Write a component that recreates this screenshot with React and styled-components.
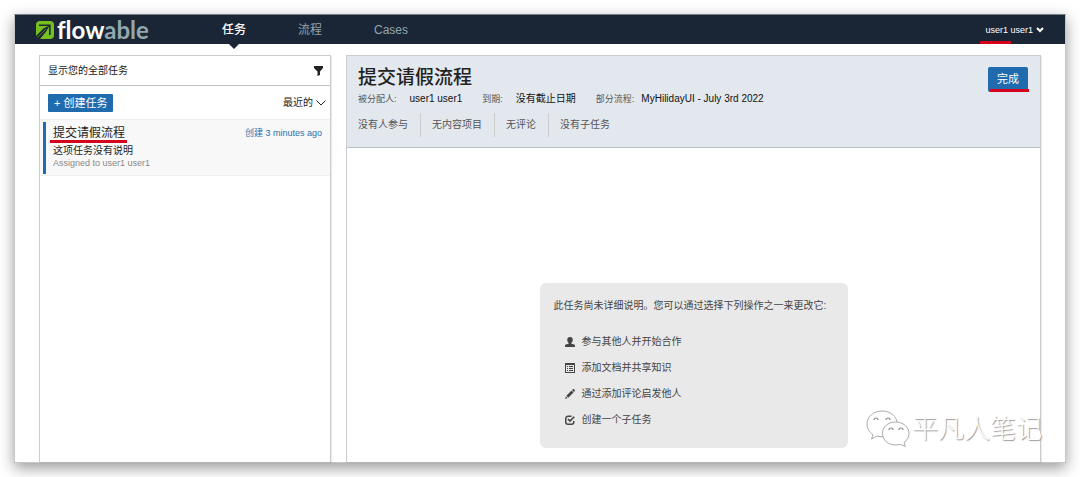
import React from 'react';
import styled, { createGlobalStyle } from 'styled-components';

const stats = ['没有人参与', '无内容项目', '无评论', '没有子任务'];

const UserIcon = () => (
  <Icon viewBox="0 0 20 20">
    <path d="M10 0C6 0 4.500 2.300 4.500 5.500c0 2.700 1 4.800 2.700 6.500v1.500L1.600 15C.5 15.500 0 16.200 0 17v3h20v-3c0-.8-.5-1.500-1.600-2l-5.600-1.500V12c1.700-1.700 2.700-3.800 2.700-6.500C15.500 2.300 14 0 10 0z" />
  </Icon>
);

const ListIcon = () => (
  <Icon viewBox="0 0 20 20">
    <path fillRule="evenodd" d="M1 0h18a1 1 0 0 1 1 1v18a1 1 0 0 1-1 1H1a1 1 0 0 1-1-1V1a1 1 0 0 1 1-1zm1 4v14h16V4zm2 2h2v2H4zm4 0h8v2H8zm-4 4h2v2H4zm4 0h8v2H8zm-4 4h2v2H4zm4 0h8v2H8z" />
  </Icon>
);

const PencilIcon = () => (
  <Icon viewBox="0 0 20 20">
    <path d="M15.600.6a1.800 1.800 0 0 1 2.500 0l1.300 1.300a1.800 1.800 0 0 1 0 2.500L18 5.800 14.200 2zM13.200 3l3.800 3.800L6.500 17.300 2.700 13.500zM1.800 14.800l3.400 3.400L0 20z" />
  </Icon>
);

const CheckIcon = () => (
  <Icon viewBox="0 0 20 20">
    <path d="M13 2.500H6A4.500 4.500 0 0 0 1.500 7v7A4.500 4.500 0 0 0 6 18.500h7a4.500 4.500 0 0 0 4.500-4.500v-2" fill="none" stroke="currentColor" strokeWidth="3" />
    <path d="M6 8l4 4L18.500 3.500" fill="none" stroke="currentColor" strokeWidth="3.400" />
  </Icon>
);

const actions = [
  { icon: UserIcon, text: '参与其他人并开始合作' },
  { icon: ListIcon, text: '添加文档并共享知识' },
  { icon: PencilIcon, text: '通过添加评论启发他人' },
  { icon: CheckIcon, text: '创建一个子任务' },
];

const Logo = () => (
  <Brand href="#" aria-label="flowable">
    <svg width="18" height="18" viewBox="0 0 18 18">
      <path d="M4 0h10a4 4 0 0 1 4 4v10a4 4 0 0 1-4 4H0V4a4 4 0 0 1 4-4z" fill="#78be20" />
      <path d="M3 4.200h10.800V14" fill="none" stroke="#1a2635" strokeWidth="1.600" />
      <path d="M13.500 4.500L10.500 10 4 18H0v-3l7.500-7.500z" fill="#1a2635" />
      <path d="M1.500 16.500L10 8" stroke="#78be20" strokeWidth=".6" />
    </svg>
    <span>flow<em>able</em></span>
  </Brand>
);

const Watermark = () => (
  <WatermarkBox>
    <svg width="44" height="38" viewBox="0 0 44 38">
      <g fill="#fff" stroke="#aaa" strokeWidth="1">
        <path d="M16 1C7.500 1 1 6.800 1 14c0 4.500 2.200 8 6 10.500L5.500 29l5.500-3c2 .6 4 .8 6 .7C28 26 31 20 31 13.500 31 6.500 24.500 1 16 1z" />
        <path d="M29.500 12C22 12 16.500 17 16.500 23.500S22 35 29.500 35c1.700 0 3.300-.2 4.800-.7l5 2.200-1.300-4c3-2 5-5.200 5-9C43 17 37 12 29.500 12z" />
      </g>
      <g fill="none" stroke="#888" strokeWidth="1.200">
        <path d="M8 10a2 2 0 0 1 4 0M20 10a2 2 0 0 1 4 0M23 20a2 2 0 0 1 4 0M33 20a2 2 0 0 1 4 0" />
      </g>
    </svg>
    平凡人笔记
  </WatermarkBox>
);

const App = () => {
  return (
    <>
      <GlobalStyle />
      <Page>
        <AppWindow>
          <NavBar>
            <Logo />
            <NavLinks>
              <NavLink href="#" $active>任务</NavLink>
              <NavLink href="#">流程</NavLink>
              <NavLink href="#">Cases</NavLink>
            </NavLinks>
            <UserMenu>
              user1 user1
              <svg width="8" height="6" viewBox="0 0 8 6">
                <path d="M1 1l3 3 3-3" fill="none" stroke="currentColor" strokeWidth="2" />
              </svg>
            </UserMenu>
          </NavBar>
          <Main>
            <TaskList>
              <FilterHeader>
                显示您的全部任务
                <FilterButton aria-label="filter">
                  <svg width="9" height="10" viewBox="0 0 9 10">
                    <path d="M0 0h9v2L6 5.500V9L3.500 10V5.500L0 2z" fill="currentColor" />
                  </svg>
                </FilterButton>
              </FilterHeader>
              <ListToolbar>
                <CreateButton>+ 创建任务</CreateButton>
                <SortButton>
                  最近的
                  <svg width="10" height="6" viewBox="0 0 10 6">
                    <path d="M.5.5L5 5 9.500.5" fill="none" stroke="currentColor" />
                  </svg>
                </SortButton>
              </ListToolbar>
              <TaskItem>
                <TaskRow>
                  <TaskName>提交请假流程</TaskName>
                  <Created>创建 3 minutes ago</Created>
                </TaskRow>
                <TaskText>这项任务没有说明</TaskText>
                <Assigned>Assigned to user1 user1</Assigned>
              </TaskItem>
            </TaskList>
            <Detail>
              <DetailHeader>
                <div>
                  <Title>提交请假流程</Title>
                  <MetaRow>
                    <Meta><span>被分配人:</span>user1 user1</Meta>
                    <Meta><span>到期:</span>没有截止日期</Meta>
                    <Meta $tight><span>部分流程:</span>MyHilidayUI - July 3rd 2022</Meta>
                  </MetaRow>
                  <StatRow>
                    {stats.map((stat) => <Stat key={stat}>{stat}</Stat>)}
                  </StatRow>
                </div>
                <CompleteButton>完成</CompleteButton>
              </DetailHeader>
              <DetailBody>
                <HelpBox>
                  <p>此任务尚未详细说明。您可以通过选择下列操作之一来更改它:</p>
                  <ActionList>
                    {actions.map(({ icon: ActionIcon, text }) => (
                      <li key={text}>
                        <ActionLink href="#"><ActionIcon />{text}</ActionLink>
                      </li>
                    ))}
                  </ActionList>
                </HelpBox>
              </DetailBody>
            </Detail>
          </Main>
          <Watermark />
        </AppWindow>
      </Page>
    </>
  );
};

const GlobalStyle = createGlobalStyle`
  * {
    box-sizing: border-box;
  }
  body {
    margin: 0;
    background: #fff;
    font: 10px/14px "Liberation Sans", "Noto Sans CJK SC", sans-serif;
    color: #222;
  }
  button {
    font: inherit;
    color: inherit;
    border: none;
    background: none;
    padding: 0;
  }
  a {
    color: inherit;
    text-decoration: none;
  }
  h1, h2, p, ul {
    margin: 0;
    padding: 0;
  }
`;

const Page = styled.div`
  min-height: 100vh;
  display: flex;
  padding: 14px;
`;

const AppWindow = styled.div`
  flex: 1;
  display: flex;
  flex-direction: column;
  position: relative;
  border: 1px solid #c4c6c8;
  border-top-color: #77818a;
  background: #fff;
  box-shadow: 0 5px 14px rgba(0, 0, 0, 0.4);
`;

const NavBar = styled.nav`
  display: flex;
  height: 29px;
  padding: 0 21px;
  background: #1a2635;
`;

const Brand = styled.a`
  display: flex;
  align-items: center;
  gap: 3px;
  width: 160px;
  font: bold 24px/28px Lato, sans-serif;
  font-variant-ligatures: none;
  color: #fff;

  em {
    font-style: normal;
    color: #92a8b0;
  }
`;

const NavLinks = styled.div`
  display: flex;
  flex: 1;
`;

const NavLink = styled.a`
  position: relative;
  padding: 0 26px;
  font-size: 12px;
  line-height: 30px;
  font-weight: ${(props) => (props.$active ? 500 : 400)};
  color: ${(props) => (props.$active ? '#fff' : '#93a5ae')};

  &::after {
    content: '';
    display: ${(props) => (props.$active ? 'block' : 'none')};
    position: absolute;
    top: 100%;
    left: 50%;
    margin-left: -5px;
    border: 5px solid transparent;
    border-top-color: #1a2635;
    border-bottom: none;
  }
`;

const redLine = `
  content: '';
  position: absolute;
  height: 3px;
  background: #d5001c;
`;

const UserMenu = styled.button`
  position: relative;
  display: flex;
  align-items: center;
  gap: 3px;
  && {
    font-size: 9px;
    color: #fff;
  }

  &::after {
    ${redLine}
    left: -5px;
    bottom: 0;
    width: 31px;
  }
`;

const Main = styled.main`
  flex: 1;
  display: grid;
  grid-template-columns: 292px 1fr;
  gap: 15px;
  padding: 11px 24px 0 24px;
`;

const TaskList = styled.section`
  border: 1px solid #ccc;
  border-bottom: none;
  box-shadow: 1px 1px 1px rgba(0, 0, 0, 0.08);
`;

const FilterHeader = styled.header`
  display: flex;
  align-items: center;
  justify-content: space-between;
  height: 30px;
  padding: 0 7px 0 8px;
  border-bottom: 1px solid #c4c4c4;
`;

const FilterButton = styled.button`
  display: flex;
`;

const ListToolbar = styled.div`
  display: flex;
  align-items: center;
  justify-content: space-between;
  height: 34px;
  padding: 0 4px 0 8px;
  border-bottom: 1px solid #eee;
`;

const CreateButton = styled.button`
  && {
    padding: 0 6px;
    font-size: 11px;
    line-height: 18px;
    color: #fff;
    background: #1f6bae;
    border-radius: 1px;
  }
`;

const SortButton = styled.button`
  display: flex;
  align-items: center;
  gap: 3px;
`;

const TaskItem = styled.article`
  display: flex;
  flex-direction: column;
  padding: 6px 8px 6px 10px;
  background: linear-gradient(#1f6bae, #1f6bae) 3px center / 3px 52px no-repeat #f8f8f8;
  border-bottom: 1px solid #eee;
`;

const TaskRow = styled.div`
  display: flex;
  justify-content: space-between;
  padding: 0 0 3px 3px;
`;

const TaskName = styled.h2`
  position: relative;
  font-size: 12px;
  line-height: 15px;
  font-weight: 400;

  &::after {
    ${redLine}
    left: -3px;
    right: -2px;
    bottom: -2px;
  }
`;

const Created = styled.span`
  font-size: 9px;
  line-height: 15px;
  color: #2a70ad;
`;

const TaskText = styled.p`
  padding-left: 3px;
`;

const Assigned = styled.p`
  padding-left: 3px;
  font-size: 9px;
  line-height: 11px;
  color: #888;
`;

const Detail = styled.section`
  display: flex;
  flex-direction: column;
  border: 1px solid #ccc;
  border-bottom: none;
  box-shadow: 1px 1px 1px rgba(0, 0, 0, 0.08);
`;

const DetailHeader = styled.header`
  display: flex;
  justify-content: space-between;
  align-items: flex-start;
  padding: 11px 12px 10px 11px;
  background: #e3e8ef;
  border-bottom: 1px solid #b7c2cc;
`;

const Title = styled.h1`
  font-size: 19px;
  line-height: 22px;
  font-weight: 500;
`;

const MetaRow = styled.div`
  display: flex;
  gap: 20px;
  padding: 3px 0 7px;
`;

const Meta = styled.div`
  color: #111;

  span {
    margin-right: ${(props) => (props.$tight ? 7 : 13)}px;
    font-size: 9px;
    color: #555;
  }
`;

const StatRow = styled.div`
  display: flex;
`;

const Stat = styled.div`
  padding: 0 12px 0 11px;
  line-height: 24px;
  color: #555;
  border-left: 1px solid #ccc;

  &:first-child {
    padding-left: 0;
    border-left: none;
  }
`;

const CompleteButton = styled.button`
  position: relative;
  && {
    padding: 0 9px;
    font-size: 11px;
    line-height: 25px;
    color: #fff;
    background: #1f6bae;
    border-radius: 2px;
  }

  &::after {
    ${redLine}
    left: 2px;
    right: -1px;
    bottom: 0;
  }
`;

const DetailBody = styled.div`
  flex: 1;
  display: flex;
  justify-content: center;
  align-items: flex-end;
  padding: 24px 12px 14px;
`;

const HelpBox = styled.div`
  width: 308px;
  padding: 16px 14px 15px;
  border-radius: 6px;
  background: #e9e9e9;
  color: #444;
`;

const ActionList = styled.ul`
  list-style: none;
  padding: 16px 11px 0;
`;

const ActionLink = styled.a`
  display: flex;
  align-items: center;
  gap: 7px;
  line-height: 26px;
`;

const Icon = styled.svg`
  width: 10px;
  height: 10px;
  fill: currentColor;
`;

const WatermarkBox = styled.div`
  position: absolute;
  right: 23px;
  bottom: 14px;
  display: flex;
  align-items: center;
  gap: 2px;
  font-size: 26px;
  line-height: 38px;
  font-weight: 300;
  color: #fff;
  text-shadow: 1px 1px 1px #999;
`;

export default App;
